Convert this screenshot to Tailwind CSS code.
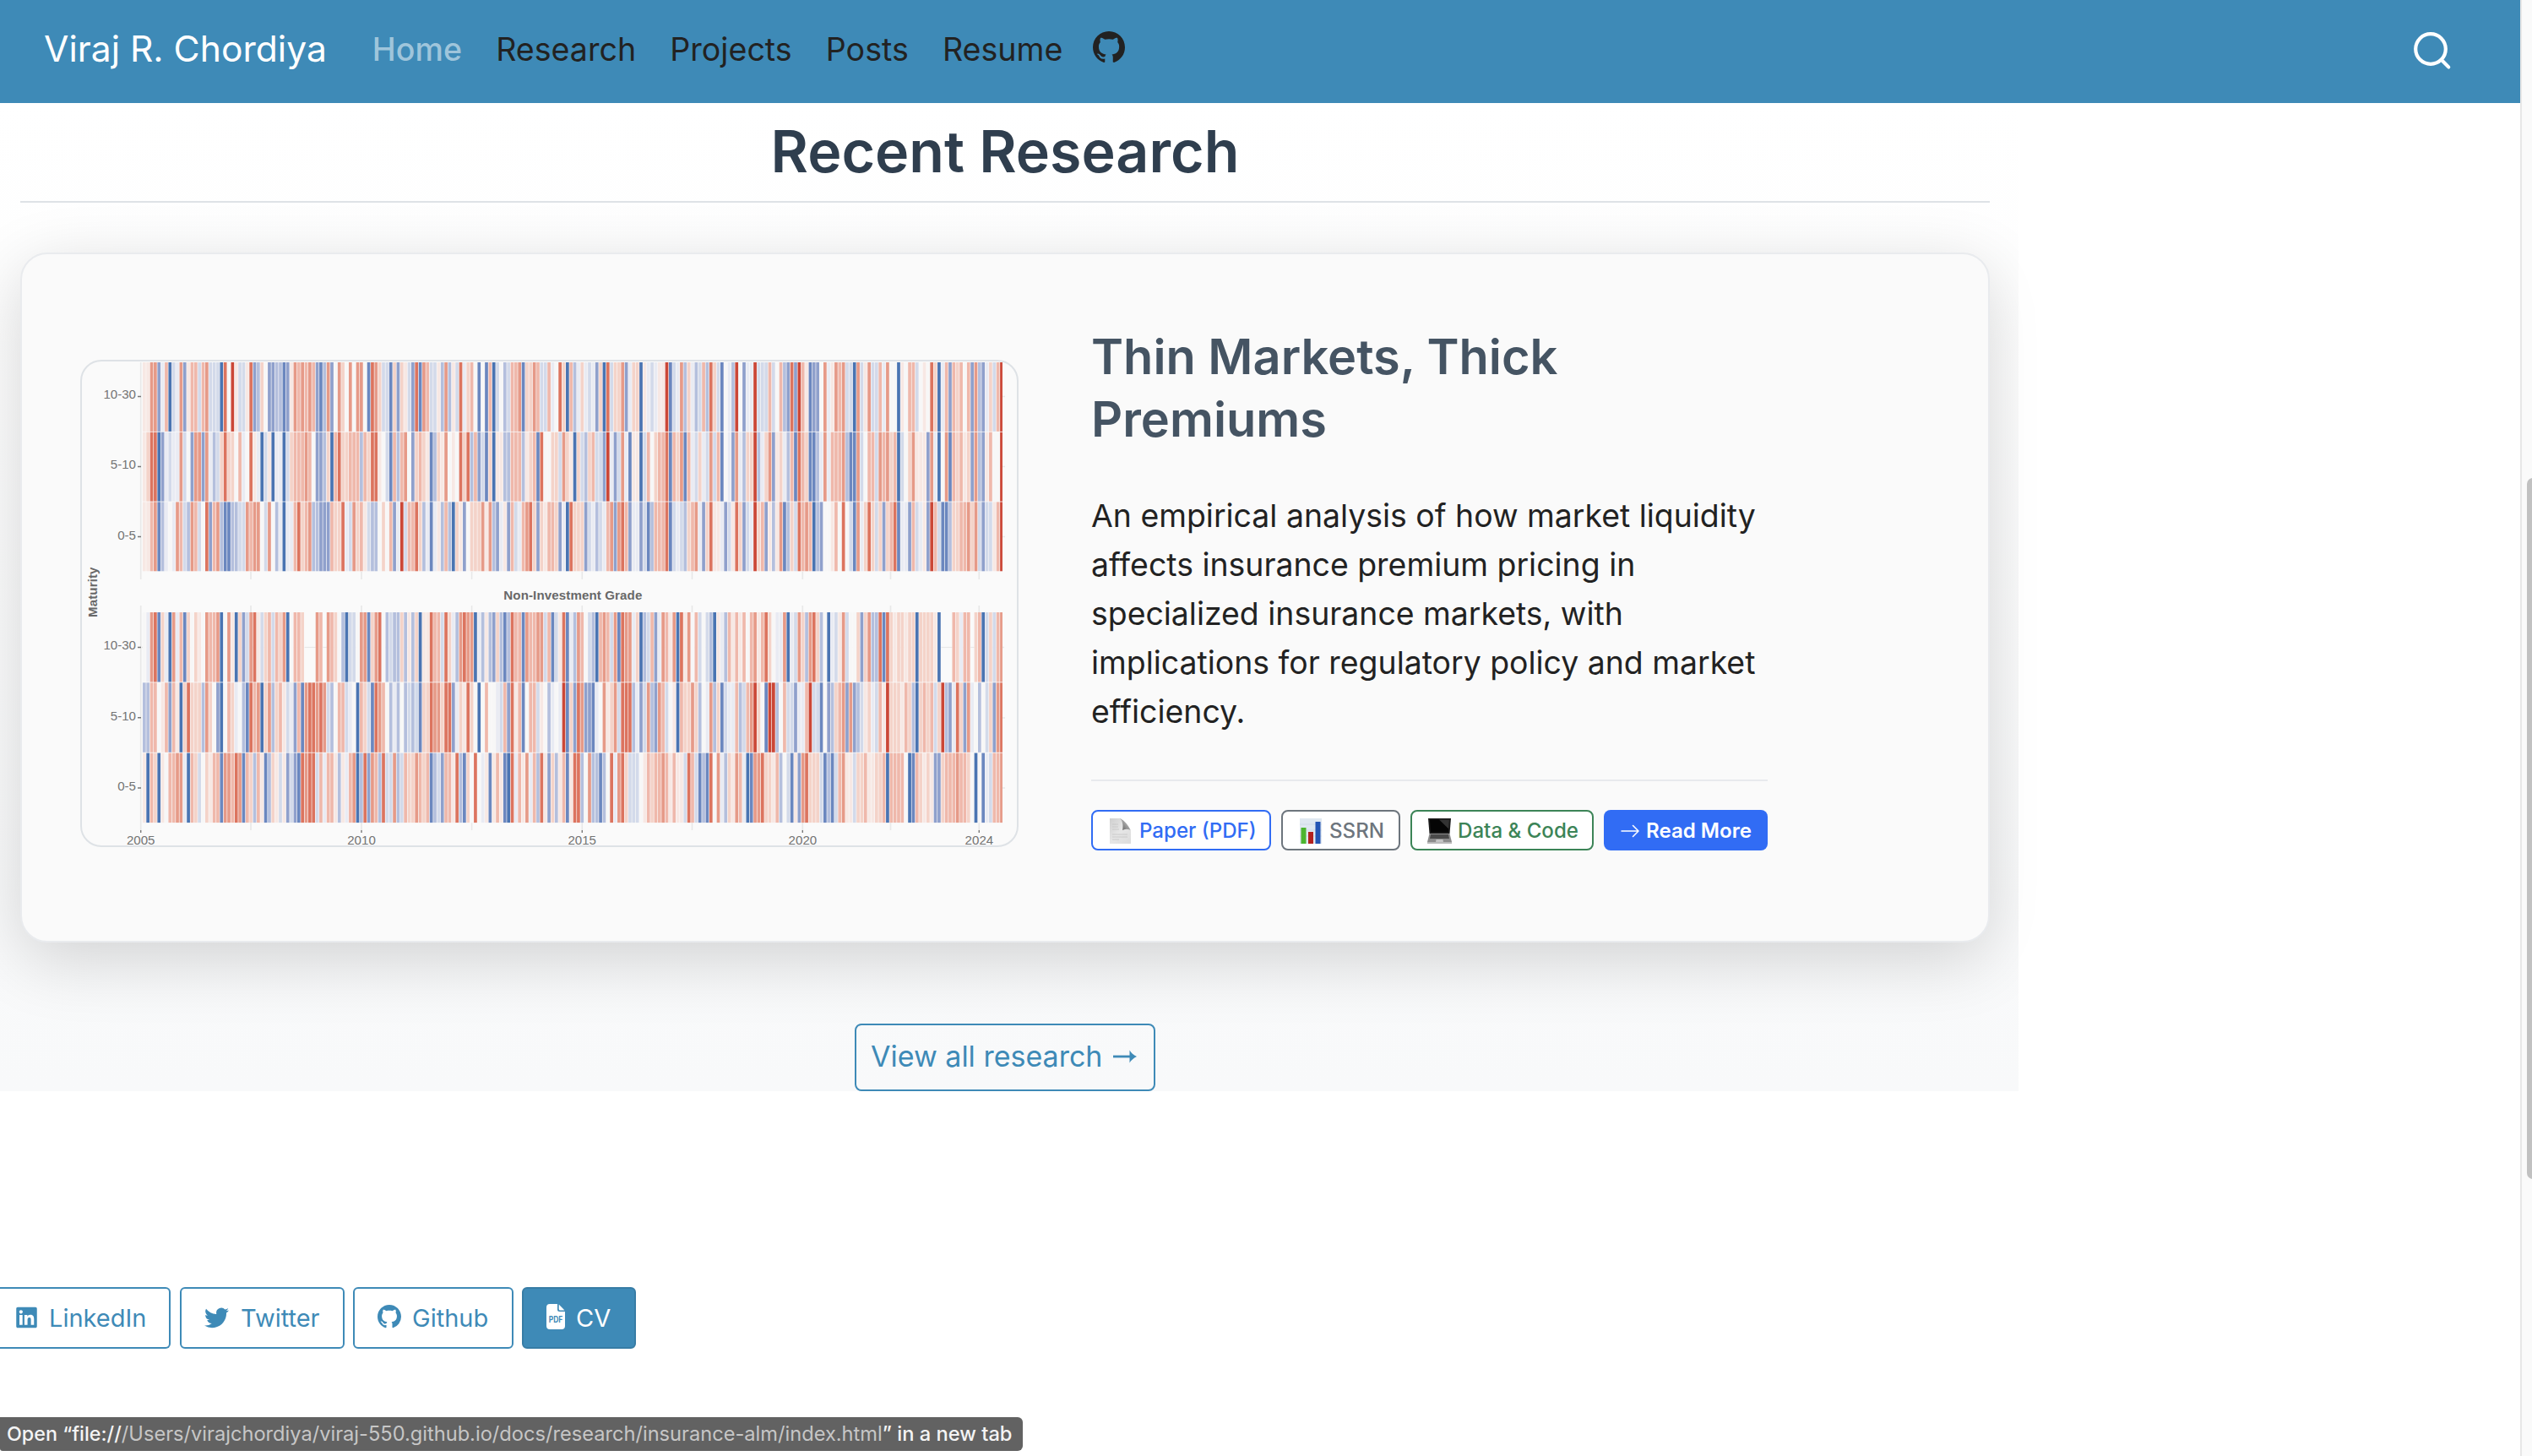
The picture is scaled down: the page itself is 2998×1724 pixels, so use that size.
<!DOCTYPE html>
<html lang="en">
<head>
<meta charset="utf-8">
<title>Viraj R. Chordiya</title>
<script src="https://cdn.jsdelivr.net/npm/@tailwindcss/browser@4"></script>
</head>
<body class="h-[1724px] w-[2998px] overflow-hidden bg-white font-['Inter','Liberation_Sans',sans-serif] text-[#222]">
<div class="relative flex h-[1724px]">
  <div class="flex w-[2984px] flex-col">
    <header class="flex h-[122px] shrink-0 items-center bg-[#3e8ab7] pr-[80px] pb-[5px] pl-[52px]">
      <a class="text-[42.6px] leading-none whitespace-nowrap text-white">Viraj R. Chordiya</a>
      <nav class="ml-[54px] flex items-center gap-[40.2px] text-[37.6px] leading-none whitespace-nowrap">
        <a class="font-medium text-[#9fc5db]">Home</a>
        <a>Research</a>
        <a>Projects</a>
        <a>Posts</a>
        <a>Resume</a>
      </nav>
      <svg class="mb-[5px] ml-[36px] size-[38px]" viewBox="0 0 16 16" fill="#222"><path d="M8 0C3.58 0 0 3.58 0 8c0 3.54 2.29 6.53 5.47 7.59.4.07.55-.17.55-.38 0-.19-.01-.82-.01-1.49-2.01.37-2.53-.49-2.69-.94-.09-.23-.48-.94-.82-1.13-.28-.15-.68-.52-.01-.53.63-.01 1.08.58 1.23.82.72 1.21 1.87.87 2.33.66.07-.52.28-.87.51-1.07-1.78-.2-3.64-.89-3.64-3.95 0-.87.31-1.59.82-2.15-.08-.2-.36-1.02.08-2.12 0 0 .67-.21 2.2.82.64-.18 1.32-.27 2-.27s1.36.09 2 .27c1.53-1.04 2.2-.82 2.2-.82.44 1.1.16 1.92.08 2.12.51.56.82 1.27.82 2.15 0 3.07-1.87 3.75-3.65 3.95.29.25.54.73.54 1.48 0 1.07-.01 1.93-.01 2.2 0 .21.15.46.55.38A8.01 8.01 0 0 0 16 8c0-4.42-3.58-8-8-8"/></svg>
      <svg class="mt-[2px] ml-auto h-[46px] w-[47px]" viewBox="2857 37 47 46" fill="none" stroke="#fff" stroke-width="4.2" stroke-linecap="round"><circle cx="2878" cy="58" r="17.8"/><path d="M2891.2 71.2l8 8.2"/></svg>
    </header>

    <div class="relative h-[1170px] shrink-0">
      <div class="absolute top-[178px] left-[24px] h-[816px] w-[2332px] rounded-[32px] shadow-[0_16px_80px_rgba(0,0,0,0.05)]"></div>
      <section class="relative h-[1170px] w-[2390px] overflow-hidden bg-linear-to-b from-white to-[#f8f9fa] px-6 pt-[22px]">
        <div class="mr-[10px]">
          <h2 class="h-[94px] text-center text-[68.1px] leading-[70px] font-semibold text-[#2f3e4e]">Recent Research</h2>
          <div class="h-[2px] bg-[#dee2e6]"></div>
          <article class="mt-[59px] flex h-[817px] items-start rounded-[32px] border-2 border-[#e9ebee] bg-[#fafafa] pl-[69px] shadow-[0_20px_80px_rgba(0,0,0,0.16)]">
            <svg class="mt-[125px] h-[577px] w-[1111px] shrink-0" viewBox="95 426 1111 577" id="heat">
              <g stroke="#e8e8e8" stroke-width="1.6">
                <path d="M166.7 429V686M297 677V686M428 677V686M558.6 677V686M689.3 677V686M819.5 677V686M950.3 677V686M1054.5 677V686M1159.3 677V686"/>
                <path d="M166.7 717V983M297 717V983M428 717V983M558.6 717V983M689.3 717V983M819.5 717V983M950.3 717V983M1054.5 717V983M1159.3 717V983M168 766.5H1189M1186 469.5h4M1186 552.5h4M1186 635.5h4M1186 850h4M1186 933h4"/>
              </g>
              <g id="cells"></g>
              <path d="M163 469.5h4M163 552.5h4M163 635.5h4M163 766.5h4M163 849.7h4M163 933h4M166.7 983v3M428 983v3M689.3 983v3M950.3 983v3M1159.3 983v3" stroke="#777" stroke-width="1.4"/>
              <g class="font-['Liberation_Sans',sans-serif] text-[15.1px]" fill="#747474">
                <g text-anchor="end">
                  <text x="161" y="472.3">10-30</text><text x="161" y="555.3">5-10</text><text x="161" y="638.5">0-5</text>
                  <text x="161" y="769.3">10-30</text><text x="161" y="852.5">5-10</text><text x="161" y="935.8">0-5</text>
                </g>
                <g text-anchor="middle">
                  <text x="166.7" y="1000">2005</text><text x="428" y="1000">2010</text><text x="689.2" y="1000">2015</text><text x="950.4" y="1000">2020</text><text x="1159.4" y="1000">2024</text>
                </g>
                <g class="font-bold" fill="#686868">
                  <text x="596.3" y="710" textLength="164">Non-Investment Grade</text>
                  <text transform="translate(115.4 731) rotate(-90)" textLength="59.5">Maturity</text>
                </g>
              </g>
              <rect x="96" y="427" width="1109" height="575" rx="24" fill="none" stroke="#dee2e6" stroke-width="2"/>
            </svg>
            <div class="mt-[84px] ml-[86px] w-[801px]">
              <h3 class="text-[57.7px] leading-[74px] font-semibold text-[#455463]">Thin Markets, Thick Premiums</h3>
              <p class="mt-[49px] text-[37.4px] leading-[58px] whitespace-nowrap">An empirical analysis of how market liquidity<br>affects insurance premium pricing in<br>specialized insurance markets, with<br>implications for regulatory policy and market<br>efficiency.</p>
              <div class="mt-[51px] h-[2px] bg-[#e8eaed]"></div>
              <div class="mt-[34px] flex h-[48px] gap-[12px] text-[24.1px] leading-none font-medium whitespace-nowrap">
                <a class="flex w-[213px] items-center rounded-[8px] border-2 border-[#316cf4] bg-white pt-[2px] pl-[18px] text-[#316cf4]">
                  <svg class="mr-[7px] h-[32px] w-[30px]" viewBox="0 0 30 32"><defs><linearGradient id="pg" x1="0" y1="0" x2="1" y2="1"><stop offset="0" stop-color="#cfcfcf"/><stop offset=".5" stop-color="#e6e6e6"/><stop offset="1" stop-color="#dcdcdc"/></linearGradient><linearGradient id="fold" x1="1" y1="0" x2="0" y2="1"><stop offset="0" stop-color="#e4e4e4"/><stop offset="1" stop-color="#555"/></linearGradient></defs><path d="M2 1h13l12 15v15H2z" fill="url(#pg)"/><path d="M14 1c3.500 3 4 8 3.200 14 4-2 8-1.500 9.800.7C24 9 20 4 14 1z" fill="url(#fold)"/><path d="M5 8h7M5 11h7M5 14h8M5 20h18M5 23h18M5 26h8" stroke="#c4c4c4" stroke-width=".8"/></svg>Paper (PDF)</a>
                <a class="flex w-[141px] items-center rounded-[8px] border-2 border-[#6d757d] bg-white pt-[2px] pl-[18px] text-[#6d757d]">
                  <svg class="mr-[7px] h-[32px] w-[30px]" viewBox="0 0 30 32"><rect x="2" y="1" width="26" height="30" fill="#dfe8f1"/><path d="M2 8h26M2 15h26M2 22h26" stroke="#cbd6e2" stroke-width=".7"/><path d="M3.500 12h6v19h-6z" fill="#4cb52f"/><path d="M12 17h6v14h-6z" fill="#b3211f"/><path d="M20.500 5h6v26h-6z" fill="#2455b4"/></svg>SSRN</a>
                <a class="flex w-[217px] items-center rounded-[8px] border-2 border-[#3c8457] bg-white pt-[2px] pl-[17px] text-[#3c8457]">
                  <svg class="mr-[6px] h-[32px] w-[31px]" viewBox="0 0 31 32"><path d="M2 1h27l-1.500 18h-24z" fill="#1c1c1c"/><path d="M4 2.500h23l-1 15H5z" fill="#050505"/><path d="M15 2.500h12l-.7 11z" fill="#333"/><path d="M3.500 19h24L30 29H1z" fill="#8c8c8c"/><path d="M5 20h21l1 5H4z" fill="#4a4a4a"/><path d="M11.500 26h8l.5 3h-9z" fill="#c4c4c4"/><path d="M1 29h29v2H1z" fill="#b9b9b9"/></svg>Data &amp; Code</a>
                <a class="flex w-[194px] items-center rounded-[8px] bg-[#316cf4] pt-[2px] pl-[20px] font-semibold text-white">
                  <svg class="mr-[8px] h-[16px] w-[22px]" viewBox="0 0 22 16" fill="none" stroke="#fff" stroke-width="1.5" stroke-linecap="round" stroke-linejoin="round"><path d="M1 8h20M14.500 1.500L21 8l-6.500 6.500"/></svg>Read More</a>
              </div>
            </div>
          </article>
          <div class="mt-[96px] flex justify-center">
            <a class="flex h-[80px] w-[356px] items-center rounded-[8px] border-2 border-[#3e8ab7] pb-[3px] pl-[17px] text-[34px] leading-none whitespace-nowrap text-[#3e8ab7]">View all research
              <svg class="mt-[1px] ml-[13px] h-[16px] w-[28px]" viewBox="0 0 28 16"><path d="M0 6.600h20V9.400H0z" fill="#3e8ab7"/><path d="M19.500.5Q22 5 28 8q-6 3-8.500 7.500z" fill="#3e8ab7"/></svg></a>
          </div>
        </div>
      </section>
    </div>

    <div class="mt-[232px] flex h-[73px] text-[29px] leading-none whitespace-nowrap text-[#3e8ab7]">
      <a class="flex w-[202px] items-center rounded-r-[6px] border-2 border-l-0 border-[#3e8ab7] pb-px pl-[19px]">
        <svg class="mr-[14px] h-[28px] w-[25px]" viewBox="0 0 448 512" fill="currentColor"><path d="M416 32H31.900C14.300 32 0 46.500 0 64.300v383.400C0 465.500 14.300 480 31.900 480H416c17.600 0 32-14.500 32-32.300V64.300c0-17.800-14.400-32.300-32-32.300zM135.400 416H69V202.200h66.500V416zm-33.200-243c-21.300 0-38.500-17.300-38.500-38.500S80.900 96 102.200 96c21.200 0 38.500 17.300 38.500 38.500 0 21.300-17.200 38.500-38.500 38.500zm282.100 243h-66.400V312c0-24.800-.5-56.700-34.500-56.700-34.600 0-39.900 27-39.900 54.900V416h-66.400V202.200h63.700v29.200h.9c8.900-16.800 30.600-34.500 62.900-34.500 67.200 0 79.700 44.300 79.700 101.900V416z"/></svg>LinkedIn</a>
      <a class="ml-[11px] flex w-[195px] items-center rounded-[6px] border-2 border-[#3e8ab7] pb-px pl-[27px]">
        <svg class="mr-[14px] mb-[2px] size-[29px]" viewBox="0 0 16 16" fill="currentColor"><path d="M5.026 15c6.038 0 9.341-5.003 9.341-9.334q.002-.211-.006-.422A6.700 6.700 0 0 0 16 3.542a6.700 6.700 0 0 1-1.889.518 3.300 3.300 0 0 0 1.447-1.817 6.500 6.500 0 0 1-2.087.793A3.286 3.286 0 0 0 7.875 6.030a9.320 9.320 0 0 1-6.767-3.429 3.290 3.290 0 0 0 1.018 4.382A3.300 3.300 0 0 1 .64 6.575v.045a3.290 3.290 0 0 0 2.632 3.218 3.200 3.200 0 0 1-.865.115 3 3 0 0 1-.614-.057 3.280 3.280 0 0 0 3.067 2.277A6.600 6.600 0 0 1 .78 13.580a6 6 0 0 1-.78-.045A9.340 9.340 0 0 0 5.026 15"/></svg>Twitter</a>
      <a class="ml-[10px] flex w-[190px] items-center rounded-[6px] border-2 border-[#3e8ab7] pb-px pl-[27px]">
        <svg class="mr-[13px] mb-[3px] size-[28px]" viewBox="0 0 16 16" fill="currentColor"><path d="M8 0C3.580 0 0 3.580 0 8c0 3.540 2.290 6.530 5.470 7.590.4.070.55-.17.55-.38 0-.19-.01-.82-.01-1.490-2.010.37-2.530-.49-2.690-.94-.09-.23-.48-.94-.82-1.130-.28-.15-.68-.52-.01-.53.63-.01 1.080.58 1.230.82.72 1.210 1.870.87 2.330.66.070-.52.28-.87.51-1.070-1.780-.2-3.640-.89-3.640-3.950 0-.87.31-1.590.82-2.150-.08-.2-.36-1.020.080-2.120 0 0 .67-.21 2.200.82.64-.18 1.320-.27 2-.27s1.360.090 2 .27c1.530-1.040 2.200-.82 2.200-.82.44 1.100.16 1.920.080 2.120.51.56.82 1.270.82 2.150 0 3.070-1.870 3.750-3.650 3.950.29.25.54.73.54 1.480 0 1.070-.01 1.930-.01 2.200 0 .21.15.46.55.38A8.010 8.010 0 0 0 16 8c0-4.420-3.580-8-8-8"/></svg>Github</a>
      <a class="ml-[10px] flex w-[135px] items-center rounded-[6px] border-2 border-[#377ca5] bg-[#3e8ab7] pb-px pl-[27px] text-white">
        <svg class="mr-[13px] mb-[3px] h-[30px] w-[22px]" viewBox="0 0 22 30"><path d="M4 0h9v6.500A2.500 2.500 0 0 0 15.500 9H22v17a4 4 0 0 1-4 4H4a4 4 0 0 1-4-4V4a4 4 0 0 1 4-4zM14.700.5L21.500 7.500h-5.300a1.500 1.500 0 0 1-1.500-1.500z" fill="#fff"/><text x="11" y="21.500" text-anchor="middle" textLength="16.500" lengthAdjust="spacingAndGlyphs" font-size="10" font-weight="700" fill="#3e8ab7">PDF</text></svg>CV</a>
    </div>
  </div>

  <div class="h-full w-[14px] overflow-hidden border-l-2 border-[#e7e7e7] bg-[#fafafa] pt-[566px] pl-[6px]">
    <div class="h-[830px] w-[14px] rounded-[7px] bg-[#c1c1c1]"></div>
  </div>

  <div class="absolute top-[1678px] left-0 flex h-[40px] w-[1211px] items-center rounded-r-[6px] rounded-bl-[3px] bg-[#626262] pb-[1px] pl-[8px] text-[23.63px] leading-none whitespace-nowrap text-[#c6c6c6]"><span class="text-[23.3px] font-medium text-[#f4f4f4]">Open “file://</span><span>/Users/virajchordiya/viraj-550.github.io/docs/research/insurance-alm/index.html</span><span class="text-[23.7px] font-medium text-[#f4f4f4]">” in a new tab</span></div>
</div>

<script>
// Monthly heat map: one character per month, 0 = deep blue, 6 = neutral, c = deep red, x = no data
const palette = {0:'#4a74b2',1:'#6b87bf',2:'#8fa0cc',3:'#b4bfdd',4:'#d3daea',5:'#e9ebf3',6:'#f7f7f7',7:'#f7e8e4',8:'#f4d3c9',9:'#efb8ab',a:'#e69a88',b:'#dc745f',c:'#cb4737'};
const panels = [
  [429, 82.700, [
    '77aa259045a279949a4440b6c7447b23862233127a9a9a9213a26a86a6aa61ba8441828742b1a94473a374b5896161904634' +
    '99a188a944956b809358545280b488a25880754577c145a3853493b841653c6255c444946932b2c971226a57a9a440a47a44' +
    '95a66076994676b80592989692a325849c',
    '78bb025455a462aa2a5348b886956b75047055048999a96223809b88999398bb7641939a6289871387a676b8b3924180773399937891b6' +
    '6884a87084389442c524a51770496899b198a1954854a491652a5388c358a2785391b981135a5999a311a46994a9a890468a7772a506a1989782a327966c',
    '779a13565a943a946b29a3113344a9aa64a6350559b89a33222988b54a897433686925c499b83515739308726888a7a325729459ab8287' +
    '998250b8882453459a2ab92552413999b1454389a528b775247b8245c892737a1384b9a903266796b641a58b848289b155294572c941138899a8a424479c'
  ]],
  [725, 83.300, [
    '65ab1850a59186876a99a06a70824ab7489498a06998xxxa9xa98630446aa18ab6343383738077b994b853abaa0537328313b991a99aa4' +
    '9147b153a964309a94a1baa58034925a97a0b7a69464307539797969a79b8655a054a83ab8360547a466828a33b1b87887880888870xxx98599x8904849a',
    '339967929708b8883a86206985631b9a08a389745291abbaba4369945609841ba9635363434188baa8bb2587b86069665492b791699476' +
    '3565c182ba22156a78a4bbb3524a32a94670988a8365a3814559349ac861cc369442559c44162389a2a234785497c88879830898948c325b82a5636482ab',
    '709807699aa50984687991aa9ba1983971387472421babb4959973759a03b2a93b44a34988a9891342997b3186b657179710b597a593b7' +
    '2837917bb36a33136b5ab8444679899a979774b94131b6a5387a9501aab8879364172ab888413149a774889778890999960198787228999a99860615499a'
  ]]
];
let rects = '';
for (const [top, height, rows] of panels) {
  rows.forEach((data, r) => {
    for (let i = 0; i < data.length && i < 234; i++) {
      const c = data[i], x = 166.600 + (i + 1) * 4.357 - 2, y = top + r * height;
      const w = i === 233 ? 2.800 : 4.357;
      rects += c === 'x'
        ? `<rect x="${x}" y="${y}" width="4.357" height="${height / 2 - 1}" fill="#fafafa"/><rect x="${x}" y="${y + height / 2 + .6}" width="4.357" height="${height / 2 - 1}" fill="#fafafa"/>`
        : `<rect x="${x}" y="${y}" width="${w}" height="${height - .8}" fill="#fbf9f9"/><rect x="${x}" y="${y}" width="${Math.min(w, 3.700)}" height="${height - .8}" fill="${palette[c]}"/>`;
    }
  });
}
document.getElementById('cells').innerHTML = rects;
</script>
</body>
</html>
